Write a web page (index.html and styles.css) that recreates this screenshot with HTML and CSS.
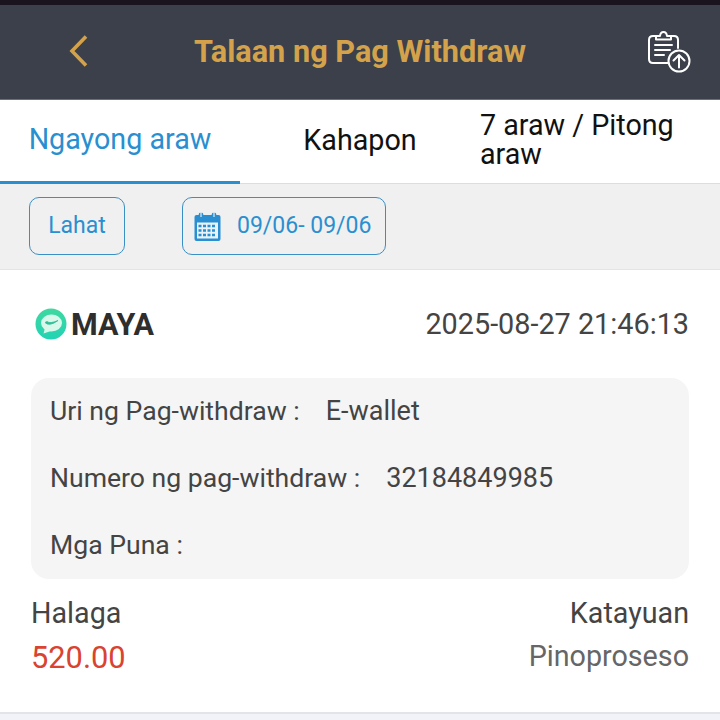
FILE: index.html
```html
<!DOCTYPE html>
<html lang="en">
<head>
    <meta charset="UTF-8">
    <meta name="viewport" content="width=device-width, initial-scale=1.0">
    <title>Talaan ng Pag Withdraw</title>
    <link rel="stylesheet" href="styles.css">
</head>
<body>
    <div class="status-strip"></div>

    <header class="top-bar">
        <svg class="back-icon" width="24" height="36" viewBox="0 0 24 36">
            <path d="M20 3.5 L6 18 L20 32.5" fill="none" stroke="#d4a24a" stroke-width="3.6"/>
        </svg>
        <h1 class="page-title">Talaan ng Pag Withdraw</h1>
        <svg class="upload-icon" width="46" height="46" viewBox="0 0 46 46" fill="none" stroke="#fff" stroke-width="2" stroke-linecap="round" stroke-linejoin="round">
            <path d="M22 35 H7 Q3 35 3 31 V12 Q3 8 7 8 H10 M25 8 H28 Q32 8 32 12 V20"/>
            <path d="M10 11.5 V8 H14 Q14.5 4 17.5 4 Q20.5 4 21 8 H25 V11.5 Z"/>
            <path d="M9 17 H26 M9 22 H24 M9 27 H18"/>
            <circle cx="33" cy="33" r="10.5" fill="#3b404b"/>
            <path d="M33 39.5 V27 M27.5 32.5 L33 27 L38.5 32.5"/>
        </svg>
    </header>

    <nav class="tabs">
        <div class="tab tab-active">Ngayong araw</div>
        <div class="tab">Kahapon</div>
        <div class="tab tab-wrap">7 araw / Pitong araw</div>
    </nav>

    <section class="filters">
        <div class="filter-btn filter-all">Lahat</div>
        <div class="filter-btn filter-date">
            <svg class="calendar-icon" width="27" height="30" viewBox="0 0 26 30">
                <rect x="0" y="4" width="26" height="26" rx="2" fill="#2a8fd0"/>
                <rect x="2.5" y="11.5" width="21" height="16" fill="#e9f2f8"/>
                <circle cx="6.5" cy="4" r="2.4" fill="#2a8fd0"/>
                <circle cx="19.5" cy="4" r="2.4" fill="#2a8fd0"/>
                <path d="M6.5 1 V6 M19.5 1 V6" stroke="#fff" stroke-width="1"/>
                <path d="M4 15 H22 M4 19.5 H22 M4 24 H22" stroke="#2a8fd0" stroke-width="2.6" stroke-dasharray="3 1.5"/>
            </svg>
            <span>09/06- 09/06</span>
        </div>
    </section>

    <main class="record">
        <div class="record-head">
            <div class="brand">
                <svg class="brand-icon" width="32" height="32" viewBox="0 0 32 32">
                    <defs>
                        <linearGradient id="mayaFill" x1="0" y1="0" x2="0" y2="1">
                            <stop offset="0" stop-color="#3fd8a0"/>
                            <stop offset="1" stop-color="#22d3b4"/>
                        </linearGradient>
                    </defs>
                    <circle cx="16" cy="16" r="15.5" fill="url(#mayaFill)"/>
                    <ellipse cx="16.5" cy="15" rx="10.5" ry="8.5" fill="#d9f8ec"/>
                    <path d="M10 20 L8.5 25.5 L16 23 Z" fill="#d9f8ec"/>
                    <path d="M10 14.5 Q14 19 23 12.5 Q15 16 12 13.5 Z" fill="#2fbf96" stroke="#2fbf96" stroke-width="0.8"/>
                </svg>
                <span class="brand-name">MAYA</span>
            </div>
            <div class="record-time">2025-08-27 21:46:13</div>
        </div>

        <div class="details">
            <div class="detail-row"><span class="detail-label">Uri ng Pag-withdraw :</span><span>E-wallet</span></div>
            <div class="detail-row"><span class="detail-label">Numero ng pag-withdraw :</span><span>32184849985</span></div>
            <div class="detail-row"><span class="detail-label">Mga Puna :</span></div>
        </div>

        <div class="summary">
            <div class="summary-col">
                <div class="summary-label">Halaga</div>
                <div class="amount">520.00</div>
            </div>
            <div class="summary-col summary-right">
                <div class="summary-label">Katayuan</div>
                <div class="state">Pinoproseso</div>
            </div>
        </div>
    </main>
</body>
</html>
```

FILE: styles.css
```css
* {
    box-sizing: border-box;
}
html, body {
    margin: 0;
    height: 720px;
    overflow: hidden;
}
body {
    font-family: Roboto, "Liberation Sans", sans-serif;
    background-color: #f2f3f8;
    color: #333;
}
.status-strip {
    height: 5px;
    background: #1a141f;
}
.top-bar {
    height: 95px;
    background: #3b404b;
    border-bottom: 1px solid #6b6f78;
    display: grid;
    grid-template-columns: 1fr auto 1fr;
    align-items: center;
    padding: 0 28px 2px;
}
.back-icon {
    margin-left: 38px;
}
.upload-icon {
    justify-self: end;
}
.page-title {
    margin: 0;
    font-size: 30.7px;
    font-weight: 700;
    color: #d4a24a;
}
.tabs {
    height: 84px;
    background: white;
    display: grid;
    grid-template-columns: 240px 240px 240px;
    border-bottom: 1px solid #ddd;
}
.tab {
    display: flex;
    align-items: center;
    justify-content: center;
    font-size: 28.7px;
    color: #111;
    padding-bottom: 5px;
}
.tab-active {
    color: #2a8fd0;
    border-bottom: 3px solid #2a8fd0;
    height: 84px;
    padding-bottom: 4px;
}
.tab-wrap {
    justify-content: flex-start;
    line-height: 29px;
}
.filters {
    height: 86px;
    background: #f0f0f0;
    border-bottom: 1px solid #e4e4e4;
    display: flex;
    align-items: center;
    gap: 57px;
    padding: 0 29px 2px;
}
.filter-btn {
    height: 58px;
    border: 1px solid #3a8fc4;
    border-radius: 10px;
    color: #2a8fd0;
    font-size: 23px;
    display: flex;
    align-items: center;
    justify-content: center;
}
.filter-all {
    width: 96px;
}
.filter-date {
    width: 204px;
    gap: 16px;
    justify-content: flex-start;
    padding-left: 11px;
}
.record {
    height: 444px;
    background: white;
    border-bottom: 2px solid #e3e4ea;
    padding: 0 31px;
}
.record-head {
    height: 108px;
    display: flex;
    align-items: center;
    justify-content: space-between;
}
.brand {
    display: flex;
    align-items: center;
    gap: 4px;
    padding-left: 4px;
}
.brand-name {
    font-size: 30.5px;
    font-weight: 700;
    color: #2e2e2e;
}
.record-time {
    font-size: 28.8px;
    color: #444;
}
.details {
    height: 201px;
    background: #f5f5f5;
    border-radius: 18px;
    padding: 0 19px 2px;
    display: flex;
    flex-direction: column;
    justify-content: space-around;
    font-size: 27px;
    color: #444;
}
.detail-row {
    display: flex;
    gap: 26px;
}
.detail-label {
    font-size: 26.6px;
}
.summary {
    display: flex;
    justify-content: space-between;
    padding-top: 17px;
}
.summary-right {
    text-align: right;
}
.summary-label {
    font-size: 28.7px;
    color: #444;
}
.amount {
    font-size: 30.8px;
    color: #d9432f;
    margin-top: 9px;
}
.state {
    font-size: 28.7px;
    color: #666;
    margin-top: 9px;
}
```
